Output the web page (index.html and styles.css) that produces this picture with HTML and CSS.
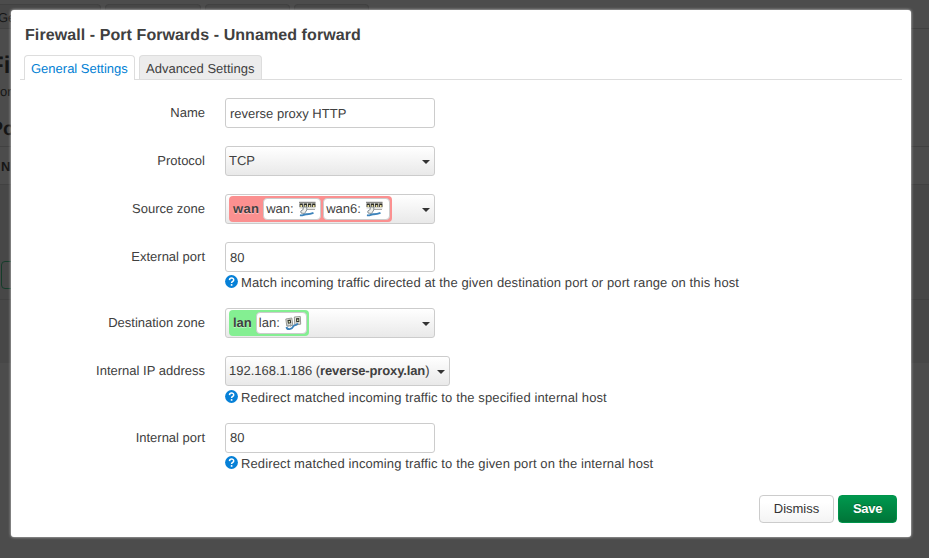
FILE: index.html
```html
<!DOCTYPE html>
<html lang="en">
<head>
<meta charset="utf-8">
<title>Firewall - Port Forwards</title>
<link rel="stylesheet" href="styles.css">
</head>
<body>
<svg width="0" height="0" class="defs" aria-hidden="true">
  <symbol id="switch" viewBox="0 0 17 16">
    <path d="M.5 1h16v6.5H.5z" fill="#d4d4ce"/>
    <path d="M0 .8h16.5v1H0z" fill="#777"/>
    <path d="M.6 2.600h3.200v3.400H.6zM4.800 2.600H8v3.400H4.800zM9 2.600h3.200v3.400H9zM13.200 2.600h3.200v3.400h-3.200z" fill="#292a25"/>
    <path d="M1.400 4h1.600v2H1.400zM5.600 4h1.600v2H5.600zM9.800 4h1.600v2H9.800zM14 4h1.600v2H14z" fill="#e9df9b"/>
    <path d="M8 8.500h8" stroke="#aaa"/>
    <path d="M4.200 6h3.600v3L5.500 12.500 2 12 1.800 10l2.400-1.500z" fill="#f0f0ec" stroke="#7d878d" stroke-width=".9"/>
    <path d="M1 14.200c2.500.7 4-1 6-1 2.500 0 3.500.2 7.500-1.300" stroke="#3d83bb" stroke-width="1.900" fill="none"/>
  </symbol>
  <symbol id="bridge" viewBox="0 0 17 16">
    <path d="M.8 4l6-1 1 7.400-6 .6zM9.300 2l6-.5.4 7.700-5.800.6z" fill="#e4e5df" stroke="#8c8e89" stroke-width=".9"/>
    <path d="M2.400 5l3.300-.5.5 3.800-3.300.5zM11 3.300l3.200-.3.2 3.900-3.200.3z" fill="#34372d"/>
    <path d="M3.700 6h1.300v1.500H3.700zM12.100 4.600h1.300v1.500h-1.300z" fill="#dfe7bd"/>
    <path d="M1.500 12c.5 3.200 5.500 2.600 7-.8.8-1.800 3.300-.2 4.200-3" stroke="#3d83bb" stroke-width="1.800" fill="none"/>
    <path d="M3 9.500v2.300M5.800 9.200l-.6 2.400" stroke="#9ba4a7" stroke-width="1.500"/>
  </symbol>
  <symbol id="help" viewBox="0 0 13 13">
    <circle cx="6.5" cy="6.5" r="6.4" fill="#0680d7"/>
    <path d="M4.5 5.1c.1-2.7 4.2-2.7 4.2-.2 0 1.6-2.1 1.5-2.1 3" stroke="#fff" stroke-width="1.5" fill="none"/>
    <circle cx="6.6" cy="9.9" r=".95" fill="#fff"/>
  </symbol>
</svg>

<div class="page">
  <div class="page-tabs"><span>Ge</span><span></span><span></span><span></span></div>
  <h2>Fi</h2>
  <p>or</p>
  <h3>Po</h3>
  <div class="page-head">N</div>
  <div class="page-body"><span class="page-btn"></span></div>
  <div class="page-foot"></div>
</div>

<main class="modal">
  <h4>Firewall - Port Forwards - Unnamed forward</h4>
  <ul class="tabs">
    <li class="active">General Settings</li>
    <li>Advanced Settings</li>
  </ul>
  <form class="form">
    <div class="row"><label>Name</label><div><div class="field text"><span>reverse proxy HTTP</span></div></div></div>
    <div class="row"><label>Protocol</label><div><div class="field select"><span>TCP</span><i class="caret"></i></div></div></div>
    <div class="row"><label>Source zone</label><div><div class="field select">
      <div class="zone wan"><b>wan</b><span class="net">wan:<svg><use href="#switch"/></svg></span><span class="net">wan6:<svg><use href="#switch"/></svg></span></div><i class="caret"></i></div></div></div>
    <div class="row"><label>External port</label><div><div class="field text"><span>80</span></div>
      <p class="hint"><svg><use href="#help"/></svg><span>Match incoming traffic directed at the given destination port or port range on this host</span></p></div></div>
    <div class="row"><label>Destination zone</label><div><div class="field select">
      <div class="zone lan"><b>lan</b><span class="net">lan:<svg><use href="#bridge"/></svg></span></div><i class="caret"></i></div></div></div>
    <div class="row ip"><label>Internal IP address</label><div><div class="field select wide"><span>192.168.1.186 (<b>reverse-proxy.lan</b>)</span><i class="caret"></i></div>
      <p class="hint"><svg><use href="#help"/></svg><span>Redirect matched incoming traffic to the specified internal host</span></p></div></div>
    <div class="row"><label>Internal port</label><div><div class="field"><span>80</span></div>
      <p class="hint"><svg><use href="#help"/></svg><span>Redirect matched incoming traffic to the given port on the internal host</span></p></div></div>
  </form>
  <div class="actions"><button>Dismiss</button><button class="save">Save</button></div>
</main>
</body>
</html>
```
FILE: styles.css
```css
* { box-sizing: border-box; }
html, body { height: 100%; }
body {
  margin: 0;
  overflow: hidden;
  background: #4c4c4c;
  color: #404040;
  font: 13px/18px "Liberation Sans", Arial, sans-serif;
  text-rendering: geometricPrecision;
}
h2, h3, h4, p, ul { margin: 0; padding: 0; }
.defs { position: absolute; }

/* dimmed page behind the dialog */
.page { color: #151515; padding-top: 4px; }
.page-tabs {
  display: flex;
  gap: 4px;
  height: 25px;
  border-bottom: 1px solid #414141;
}
.page-tabs span {
  height: 24px;
  padding-top: 4px;
  border: 1px solid #414141;
  border-bottom: 0;
  border-radius: 4px 4px 0 0;
  background: #474747;
  width: 96px;
}
.page-tabs span:first-child { width: 101px; text-indent: -2px; border-left: 0; border-top-left-radius: 0; }
.page-tabs span:nth-child(3) { width: 85px; }
.page-tabs span:nth-child(4) { width: 75px; }
.page h2 { font-size: 24px; line-height: 36px; margin: 19px 0 0 -11px; }
.page p { height: 18px; margin-top: -1px; }
.page h3 { font-size: 19.5px; line-height: 30px; margin: 13px 0 0 -10px; height: 32px; }
.page-head {
  height: 39px;
  padding: 11px 0 0 1px;
  border: 1px solid #414141;
  border-width: 1px 0;
  font-weight: bold;
}
.page-body { height: 115px; padding-top: 76px; border-bottom: 1px solid #414141; background: #474747; }
.page-btn { display: block; width: 60px; height: 28px; margin-left: 1px; border: 1px solid #153c2a; border-radius: 4px; }
.page-foot { height: 63px; background: #474747; }

/* dialog */
.modal {
  position: absolute;
  left: 11px;
  top: 10px;
  width: 900px;
  height: 527px;
  padding: 17px 14px 14px;
  display: flex;
  flex-direction: column;
  background: #fff;
  border-radius: 3px;
  box-shadow: 0 0 3px #ddd;
}
h4 { font-size: 16px; line-height: 18px; width: max-content; letter-spacing: .08px; }
.tabs {
  display: flex;
  list-style: none;
  gap: 4px;
  height: 25px;
  margin: 10px -5px 0;
  padding-left: 4px;
  flex: none;
  border-bottom: 1px solid #ddd;
}
.tabs li {
  height: 24px;
  width: 123px;
  padding: 4px 0 0 6px;
  border: 1px solid #ddd;
  border-bottom: 0;
  border-radius: 4px 4px 0 0;
  background: #ececec;
  white-space: nowrap;
}
.tabs .active { width: 111px; height: 25px; background: #fff; color: #0080d4; }
.form { margin-top: 18px; }
.row { display: flex; gap: 20px; margin-bottom: 18px; }
.row.ip { margin-bottom: 19px; }
.row.ip .hint { top: 1px; }
label { width: 180px; padding-top: 6px; text-align: right; }
.field {
  display: flex;
  align-items: center;
  width: 210px;
  height: 30px;
  padding: 0 4px;
  border: 1px solid #ccc;
  border-radius: 3px;
  white-space: nowrap;
}
.text { padding-top: 2px; }
.select { padding: 0 4px 0 3px; background: linear-gradient(#fff, #e9e9e9); justify-content: space-between; }
.wide { width: 225px; }
.field b { font-weight: bold; }
.wide b { letter-spacing: -.14px; }
.caret { border: 4px solid transparent; border-top: 4px solid #333; border-bottom: 0; margin-top: 1px; flex: none; }
.zone { display: flex; align-items: center; gap: 2px; height: 26px; padding: 0 2px 0 4px; border-radius: 4px; text-shadow: 0 1px 1px #fff8; }
.zone b { margin-right: 2px; }
.wan b { letter-spacing: .3px; }
.wan { background: #fb9090; }
.lan { background: #84ef92; }
.net {
  display: flex;
  align-items: center;
  justify-content: space-between;
  width: 58px;
  height: 22px;
  padding: 0 4px 0 2px;
  border: 1px solid #ccc;
  border-radius: 4px;
  background: #fff;
}
.net + .net { width: 67px; padding-right: 6px; }
.lan .net { width: 51px; }
.net svg { width: 17px; height: 16px; }
.hint { display: flex; align-items: center; position: relative; height: 18px; gap: 3px; white-space: nowrap; }
.hint span { padding-top: 3px; letter-spacing: .12px; }
.hint svg { width: 13px; height: 13px; }

.actions { display: flex; justify-content: flex-end; gap: 4px; margin-top: auto; }
button {
  width: 75px;
  height: 28px;
  padding: 0;
  border: 1px solid #ccc;
  border-radius: 4px;
  background: linear-gradient(#fff, #fff 25%, #f4f4f4);
  color: #333;
  font: inherit;
}
.save { width: 59px; border-color: #00944b; background: linear-gradient(#00984e, #007538); color: #fff; font-weight: bold; letter-spacing: -.3px; text-shadow: 0 -1px 0 #0004; }
```
